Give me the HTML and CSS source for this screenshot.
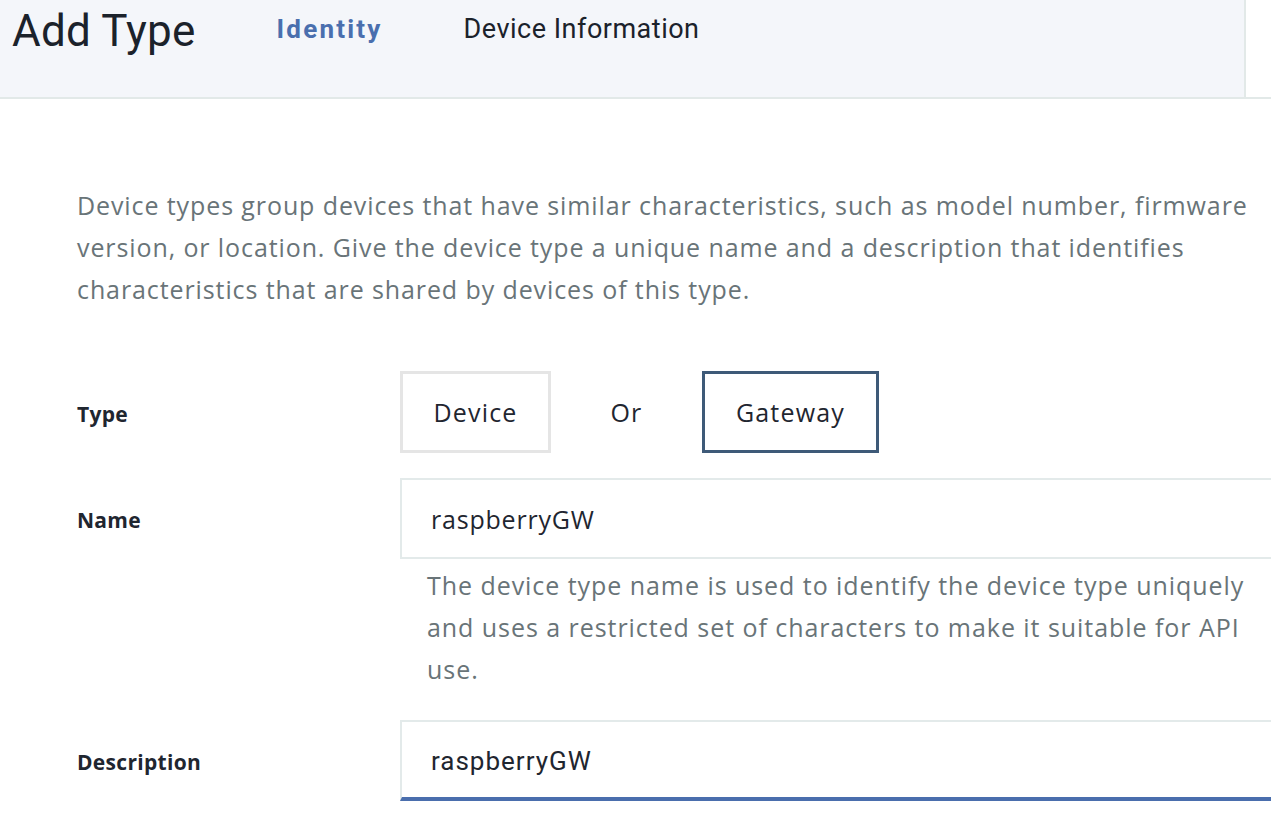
FILE: index.html
```html
<!DOCTYPE html>
<html lang="en">
<head>
<meta charset="utf-8">
<title>Add Type</title>
<link rel="stylesheet" href="styles.css">
</head>
<body>
<div class="topbar">
  <header class="header">
    <h1 class="title">Add Type</h1>
    <nav class="steps">
      <span class="step step-active">Identity</span>
      <span class="step">Device Information</span>
    </nav>
  </header>
</div>
<main class="content">
  <p class="intro">Device types group devices that have similar characteristics, such as model number, firmware version, or location. Give the device type a unique name and a description that identifies characteristics that are shared by devices of this type.</p>
  <div class="form">
    <div class="row row-type">
      <label class="label">Type</label>
      <div class="choice">
        <button class="opt opt-device">Device</button>
        <span class="or">Or</span>
        <button class="opt opt-selected">Gateway</button>
      </div>
    </div>
    <div class="row row-name">
      <label class="label">Name</label>
      <div class="field">
        <div class="input">raspberryGW</div>
        <p class="help">The device type name is used to identify the device type uniquely and uses a restricted set of characters to make it suitable for API use.</p>
      </div>
    </div>
    <div class="row row-desc">
      <label class="label">Description</label>
      <div class="field">
        <div class="input input-focus">raspberryGW</div>
      </div>
    </div>
  </div>
</main>
</body>
</html>
```
FILE: styles.css
```css
html, body {
  margin: 0;
  padding: 0;
  background: #ffffff;
  overflow: hidden;
}
body {
  font-family: "Open Sans", "Noto Sans", sans-serif;
  color: #1f2630;
  width: 1271px;
  height: 827px;
}
.topbar {
  border-bottom: 2px solid #e2e9e8;
}
.header {
  width: 1244px;
  height: 97px;
  background: #f4f6fa;
  border-right: 2px solid #e2e9e8;
  display: flex;
  align-items: flex-start;
}
.title {
  margin: 0;
  font-family: Roboto, "Liberation Sans", sans-serif;
  font-weight: 400;
  font-size: 44px;
  letter-spacing: 0.2px;
  line-height: 62px;
  padding-left: 12px;
  color: #1b222b;
}
.steps {
  display: flex;
  margin-left: 81px;
  gap: 81px;
  padding-top: 10px;
}
.step {
  font-family: Roboto, "Liberation Sans", sans-serif;
  font-size: 27px;
  letter-spacing: 0.5px;
  line-height: 38px;
  color: #1b222b;
}
.step-active {
  font-weight: 700;
  font-size: 26px;
  color: #4a6fae;
  letter-spacing: 2.2px;
}
.content {
  padding: 85px 0 0 77px;
}
.intro {
  margin: 0;
  width: 1194px;
  font-size: 25px;
  letter-spacing: 0.9px;
  line-height: 42px;
  color: #697478;
}
.form {
  margin-top: 61px;
  display: flex;
  flex-direction: column;
}
.row {
  display: grid;
  grid-template-columns: 323px 1fr;
}
.label {
  font-weight: 700;
  font-size: 21px;
  letter-spacing: 0.3px;
  color: #1f2630;
  align-self: start;
}
.row-type .label { padding-top: 29px; }
.row-name { margin-top: 25px; }
.row-name .label { padding-top: 28px; }
.row-desc { margin-top: 30px; }
.row-desc .label { padding-top: 28px; }
.choice {
  display: flex;
  align-items: center;
}
.opt {
  font-family: "Open Sans", "Noto Sans", sans-serif;
  font-size: 25px;
  letter-spacing: 1.2px;
  color: #1f2630;
  background: #ffffff;
  height: 82px;
  width: 151px;
  padding: 0;
  border: 3px solid #e5e5e5;
  cursor: pointer;
}
.opt-selected {
  border-color: #3e5a78;
  width: 177px;
}
.or {
  font-size: 25px;
  letter-spacing: 1.2px;
  width: 151px;
  text-align: center;
}
.field {
  display: flex;
  flex-direction: column;
}
.input {
  box-sizing: border-box;
  width: 900px;
  height: 81px;
  border: 2px solid #e3eaea;
  padding: 0 29px;
  display: flex;
  align-items: center;
  font-size: 25px;
  letter-spacing: 0.8px;
  color: #1f2630;
}
.input-focus {
  border-bottom: 4px solid #4a6ead;
  font-family: Roboto, "Liberation Sans", sans-serif;
  font-size: 26px;
  letter-spacing: 1px;
  padding-top: 2px;
}
.help {
  margin: 5px 0 0 27px;
  width: 835px;
  font-size: 25px;
  letter-spacing: 0.95px;
  line-height: 42px;
  color: #697478;
}
```
